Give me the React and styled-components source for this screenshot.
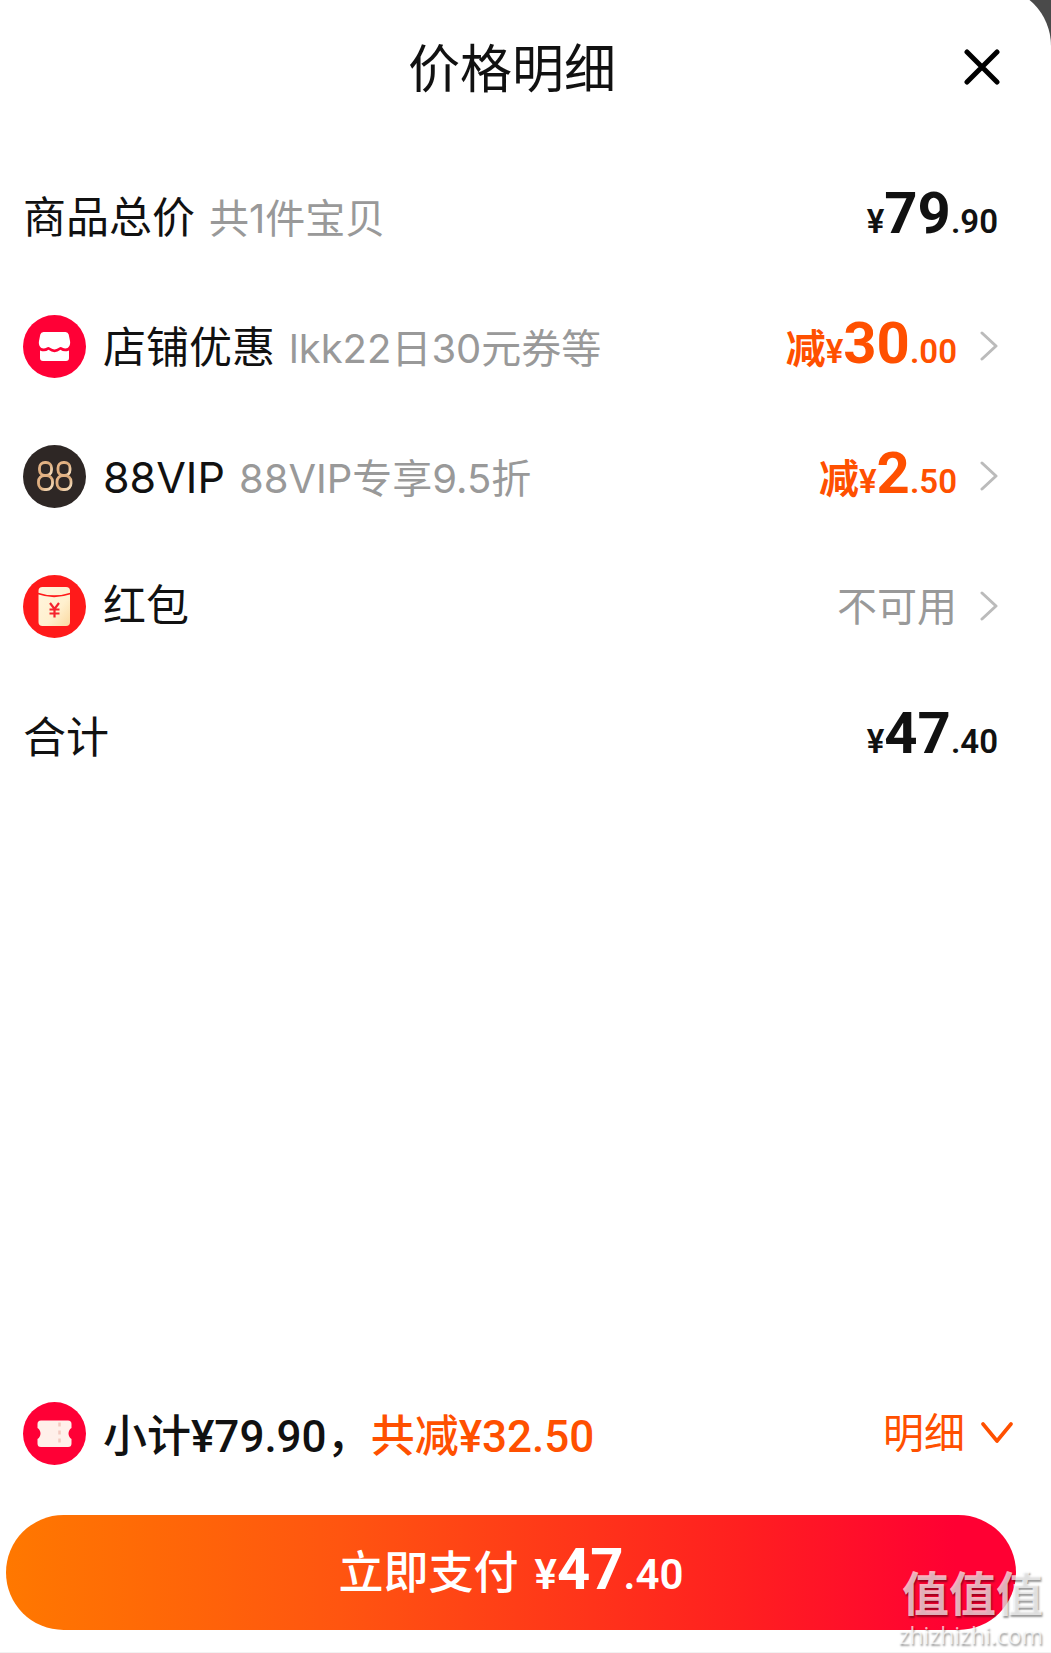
import React from "react";
import styled, { createGlobalStyle } from "styled-components";

const GlobalStyle = createGlobalStyle`
  * {
    box-sizing: border-box;
  }

  body {
    margin: 0;
    background: #4a4a4a;
    color: #111;
    font-family: Inter, "Noto Sans CJK SC", sans-serif;
  }

  button {
    border: 0;
    padding: 0;
    background: none;
    color: inherit;
    font-family: inherit;
    cursor: pointer;
  }
`;

const Page = styled.div`
  position: relative;
  overflow: hidden;
`;

const Sheet = styled.main`
  display: flex;
  flex-direction: column;
  min-height: calc(100vh + 14px);
  margin-top: -14px;
  padding-top: 14px;
  background: #fff;
  border-top-right-radius: 60px;
  border-bottom: 1px solid #f2f2f2;
`;

const Header = styled.header`
  display: grid;
  grid-template-columns: 84px 1fr 84px;
  align-items: center;
  height: 134px;
  padding-right: 27px;
`;

const Title = styled.h1`
  grid-column: 2;
  margin: 0;
  padding-top: 6px;
  font-size: 52px;
  font-weight: 400;
  line-height: 64px;
  text-align: center;
`;

const CloseButton = styled.button`
  display: flex;
  justify-content: center;
`;

const List = styled.ul`
  flex: 1;
  margin: 0;
  padding: 17px 53px 0 23px;
  list-style: none;
`;

const Row = styled.li`
  display: flex;
  align-items: center;
  height: 130px;
`;

const IconSlot = styled.span`
  display: flex;
  margin-right: 17px;
`;

const RowText = styled.div`
  display: flex;
  flex: 1;
  align-items: baseline;
  justify-content: space-between;
  padding-top: 8px;
  line-height: 60px;
`;

const Label = styled.span`
  font-size: 43px;
`;

const Note = styled.span`
  margin-left: 14px;
  color: #999;
  font-size: 40px;
`;

const Muted = styled.span`
  color: #999;
  font-size: 40px;
`;

const Amount = styled.span`
  color: ${(props) => (props.$accent ? "#ff5000" : "inherit")};
  font-family: Roboto, "Noto Sans CJK SC", sans-serif;
  font-size: ${(props) => (props.$large ? "42px" : "33px")};
  font-weight: 600;
  white-space: nowrap;

  b {
    font-size: 58px;
    font-weight: 700;
  }
`;

const Prefix = styled.span`
  font-family: "Noto Sans CJK SC", sans-serif;
  font-size: 40px;
  font-weight: 700;
`;

const ArrowButton = styled.button`
  display: flex;
  margin-left: 23px;
`;

const Summary = styled.div`
  display: flex;
  align-items: center;
  height: 164px;
  padding: 0 38px 0 23px;
`;

const SummaryText = styled.p`
  flex: 1;
  margin: 0;
  padding-top: 8px;
  font-family: Roboto, "Noto Sans CJK SC", sans-serif;
  font-size: 44px;
  font-weight: 500;
  line-height: 60px;

  em {
    color: #ff5000;
    font-style: normal;
  }
`;

const DetailButton = styled.button`
  display: flex;
  align-items: center;
  gap: 16px;
  color: #ff5000;
  font-size: 41px;
  line-height: 60px;
`;

const PayButton = styled.button`
  display: flex;
  align-items: baseline;
  justify-content: center;
  gap: 16px;
  height: 115px;
  margin: 0 35px 22px 6px;
  border-radius: 58px;
  background: linear-gradient(
    90deg,
    #ff7800,
    #ff5510 33%,
    #ff1f20 73%,
    #ff0033 94%
  );
  color: #fff;
  font-size: 45px;
  font-weight: 500;
  line-height: 108px;
`;

const Watermark = styled.div`
  position: absolute;
  right: 8px;
  bottom: 2px;
  color: rgba(255, 255, 255, 0.7);
  font-size: 47px;
  font-weight: 700;
  line-height: 50px;
  text-align: right;
  text-shadow: 1px 2px 2px rgba(0, 0, 0, 0.4);
  pointer-events: none;

  small {
    display: block;
    font-family: "Open Sans", sans-serif;
    font-size: 23px;
    font-weight: 500;
    line-height: 32px;
  }
`;

const ShopIcon = () => (
  <svg width="63" height="63" viewBox="0 0 63 63" aria-hidden="true">
    <circle cx="31.5" cy="31.5" r="31.5" fill="#ff0036" />
    <path
      d="M20.500 17h22q2.500 0 3.200 2.500l1.300 6.500c.8 4-1.500 7.500-4.500 7.500-2.500 0-3.500-1.500-5-1.500s-3 2.500-6 2.500-4.500-2.500-6-2.500-2.500 1.500-5 1.500c-3 0-5.300-3.500-4.500-7.500l1.300-6.500q.700-2.500 3.200-2.500z"
      fill="#fff"
    />
    <path
      d="M17 35.500q5 2 8.500-.7 6 4.700 12 0 3.500 2.700 8.500.7V43q0 3-3 3H20q-3 0-3-3z"
      fill="#fff"
    />
  </svg>
);

const VipIcon = () => (
  <svg width="63" height="63" viewBox="0 0 63 63" aria-hidden="true">
    <defs>
      <linearGradient id="gold" x1="0" y1="0" x2="1" y2="1">
        <stop offset="0" stopColor="#e9b98c" />
        <stop offset=".5" stopColor="#d9a878" />
        <stop offset="1" stopColor="#fbe6c8" />
      </linearGradient>
    </defs>
    <circle cx="31.5" cy="31.5" r="31.5" fill="#2e2725" />
    <g fill="none" stroke="url(#gold)" strokeWidth="2.800">
      <rect x="16.500" y="17.500" width="12" height="13" rx="5.500" />
      <rect x="15.500" y="30.500" width="14" height="14" rx="6" />
      <rect x="35" y="17.500" width="12" height="13" rx="5.500" />
      <rect x="34" y="30.500" width="14" height="14" rx="6" />
    </g>
  </svg>
);

const RedPacketIcon = () => (
  <svg width="63" height="63" viewBox="0 0 63 63" aria-hidden="true">
    <defs>
      <linearGradient id="packet" x1="0" y1="0" x2="1" y2="1">
        <stop offset="0" stopColor="#fff6df" />
        <stop offset=".6" stopColor="#fff0cf" />
        <stop offset="1" stopColor="#fbd9a0" />
      </linearGradient>
    </defs>
    <circle cx="31.5" cy="31.5" r="31.5" fill="#ff1a1a" />
    <rect x="15.500" y="12" width="31.500" height="39" rx="4" fill="url(#packet)" />
    <path d="M15 18.500Q31 24 47.500 18.500" fill="none" stroke="#ff1a1a" strokeWidth="1.800" />
    <path
      d="M27 28l4.500 6 4.500-6M31.500 34v8.500M26.500 34.500h10M26.500 38.500h10"
      fill="none"
      stroke="#f5222d"
      strokeWidth="2.200"
    />
  </svg>
);

const CouponIcon = () => (
  <svg width="63" height="63" viewBox="0 0 63 63" aria-hidden="true">
    <circle cx="31.5" cy="31.5" r="31.5" fill="#ff0036" />
    <path
      d="M18 18.500h27q3.500 0 3.500 3.500v4c-4 2.500-4 8.500 0 11v4.500q0 3.500-3.500 3.500H18q-3.500 0-3.500-3.500V37c4-2.500 4-8.500 0-11v-4q0-3.500 3.500-3.500z"
      fill="#fff0ea"
    />
    <path d="M36.500 20.500v23" stroke="#f3c9c0" strokeWidth="2.500" strokeDasharray="4 4" />
  </svg>
);

const CloseIcon = () => (
  <svg width="36" height="36" viewBox="0 0 36 36" aria-hidden="true">
    <path d="M3 3l30 30M33 3L3 33" stroke="#000" strokeWidth="5" strokeLinecap="round" />
  </svg>
);

const ChevronRight = () => (
  <svg width="18" height="30" viewBox="0 0 18 30" aria-hidden="true">
    <path
      d="M2 2l14 13L2 28"
      fill="none"
      stroke="#bbb"
      strokeWidth="3"
      strokeLinecap="round"
      strokeLinejoin="round"
    />
  </svg>
);

const ChevronDown = () => (
  <svg width="32" height="22" viewBox="0 0 32 22" aria-hidden="true">
    <path
      d="M2 2l14 17L30 2"
      fill="none"
      stroke="#ff5000"
      strokeWidth="3.600"
      strokeLinecap="round"
      strokeLinejoin="round"
    />
  </svg>
);

const items = [
  { label: "商品总价", note: "共1件宝贝", price: ["79", "90"] },
  {
    label: "店铺优惠",
    note: "lkk22日30元券等",
    icon: ShopIcon,
    price: ["30", "00"],
    discount: true,
  },
  {
    label: "88VIP",
    note: "88VIP专享9.5折",
    icon: VipIcon,
    price: ["2", "50"],
    discount: true,
  },
  { label: "红包", icon: RedPacketIcon, status: "不可用" },
  { label: "合计", price: ["47", "40"] },
];

const Price = ({ value, discount, large }) => (
  <Amount $accent={discount} $large={large}>
    {discount && <Prefix>减</Prefix>}¥<b>{value[0]}</b>.{value[1]}
  </Amount>
);

const PriceRow = ({ item }) => {
  const Icon = item.icon;

  return (
    <Row>
      {Icon && (
        <IconSlot>
          <Icon />
        </IconSlot>
      )}
      <RowText>
        <span>
          <Label>{item.label}</Label>
          {item.note && <Note>{item.note}</Note>}
        </span>
        {item.price ? (
          <Price value={item.price} discount={item.discount} />
        ) : (
          <Muted>{item.status}</Muted>
        )}
      </RowText>
      {Icon && (
        <ArrowButton aria-label={item.label}>
          <ChevronRight />
        </ArrowButton>
      )}
    </Row>
  );
};

const App = () => (
  <Page>
    <GlobalStyle />
    <Sheet>
      <Header>
        <Title>价格明细</Title>
        <CloseButton aria-label="关闭">
          <CloseIcon />
        </CloseButton>
      </Header>

      <List>
        {items.map((item) => (
          <PriceRow key={item.label} item={item} />
        ))}
      </List>

      <Summary>
        <IconSlot>
          <CouponIcon />
        </IconSlot>
        <SummaryText>
          小计¥79.90，<em>共减¥32.50</em>
        </SummaryText>
        <DetailButton>
          明细
          <ChevronDown />
        </DetailButton>
      </Summary>

      <PayButton>
        立即支付
        <Price value={["47", "40"]} large />
      </PayButton>
    </Sheet>

    <Watermark>
      值值值
      <small>zhizhizhi.com</small>
    </Watermark>
  </Page>
);

export default App;
